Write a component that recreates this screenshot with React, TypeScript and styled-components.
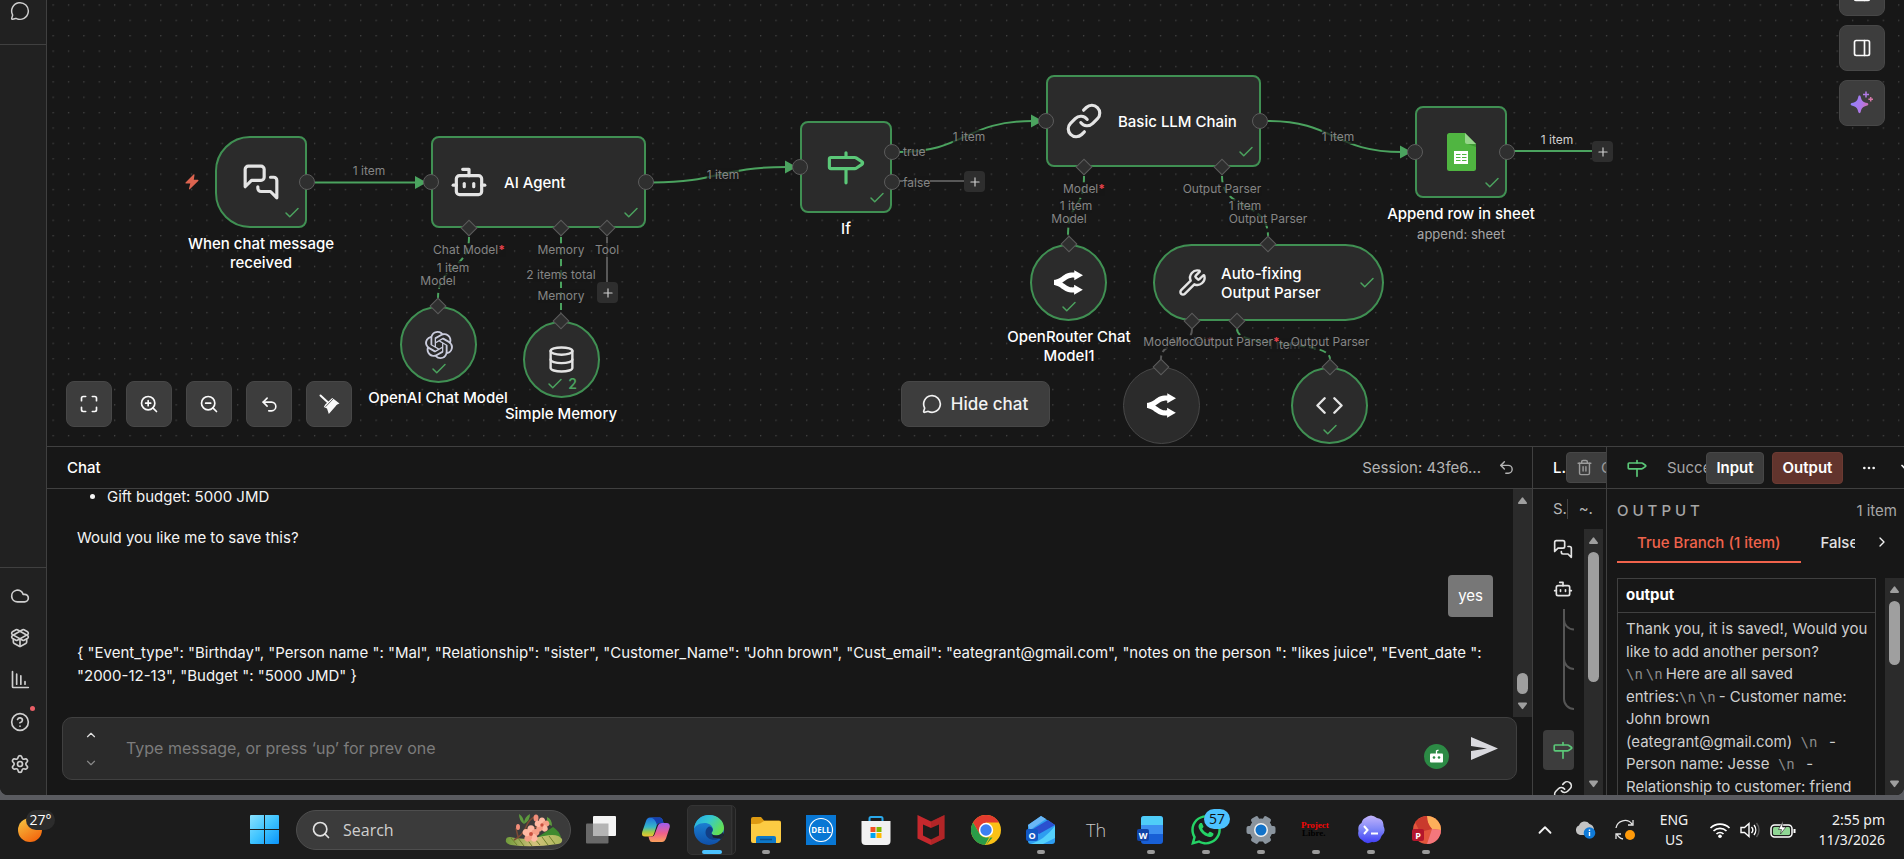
import React from "react";
import styled, { createGlobalStyle, css } from "styled-components";
import {
  Bot,
  Check,
  ChevronDown,
  ChevronRight,
  ChevronUp,
  CircleQuestionMark,
  Cloud,
  Code,
  Database,
  Ellipsis,
  Link,
  Maximize,
  MessageCircle,
  PanelRight,
  Plus,
  Search,
  Settings,
  Trash2,
  Undo2,
  Wrench,
  ZoomIn,
  ZoomOut,
} from "lucide-react";
import { FaWhatsapp } from "react-icons/fa";

const color = {
  canvas: "#171717",
  side: "#212121",
  surface: "#2b2b2b",
  raised: "#3d3d3d",
  line: "#404040",
  port: "#5c5c5c",
  green: "#4ba35f",
  signpost: "#5bc878",
  text: "#f2f2f2",
  soft: "#b4b4b4",
  muted: "#858585",
  accent: "#f0634c",
};

const GlobalStyle = createGlobalStyle`
  * { box-sizing: border-box; }
  body {
    margin: 0;
    background: #5a5b60;
    color: ${color.text};
    font-family: Inter, "Liberation Sans", sans-serif;
    font-size: 15px;
    overflow: hidden;
  }
  button {
    font: inherit;
    color: inherit;
    border: 0;
    padding: 0;
    background: none;
    display: flex;
    align-items: center;
    justify-content: center;
  }
`;

/* ---------- Shell ---------- */

const Desktop = styled.div`
  display: flex;
  flex-direction: column;
  height: 100vh;
`;

const AppWindow = styled.div`
  flex: 1;
  min-height: 0;
  display: flex;
  background: ${color.canvas};
  border-radius: 0 0 8px 8px;
  overflow: hidden;
  margin-bottom: 5px;
`;

const Sidebar = styled.nav`
  width: 47px;
  flex: none;
  display: flex;
  flex-direction: column;
  justify-content: space-between;
  background: ${color.side};
  border-right: 1px solid ${color.line};
`;

const SideTop = styled.div`
  height: 45px;
  display: flex;
  flex-direction: column;
  align-items: center;
  padding-right: 6px;
  border-bottom: 1px solid ${color.line};
`;

const SideBottom = styled.div`
  padding: 7px 6px 10px 0;
  display: flex;
  flex-direction: column;
  align-items: center;
  border-top: 1px solid ${color.line};
`;

const SideButton = styled.button<{ $h?: number }>`
  && {
    position: relative;
    width: 40px;
    height: ${(p) => p.$h ?? 42}px;
    color: #cfcfcf;
  }
`;

const Alert = styled.span`
  position: absolute;
  top: 5px;
  right: 5px;
  width: 5px;
  height: 5px;
  border-radius: 50%;
  background: #ea5f67;
`;

const Main = styled.main`
  flex: 1;
  min-width: 0;
  display: flex;
  flex-direction: column;
`;

/* ---------- Canvas ---------- */

const Canvas = styled.section`
  position: relative;
  flex: 1;
  min-height: 0;
  overflow: hidden;
`;

const Wires = styled.svg`
  position: absolute;
  inset: 0;
  width: 100%;
  height: 100%;
`;

const NodeBox = styled.div<{ $x: number; $y: number; $w: number; $h: number; $r: string; $idle?: boolean }>`
  position: absolute;
  left: ${(p) => p.$x}px;
  top: ${(p) => p.$y}px;
  width: ${(p) => p.$w}px;
  height: ${(p) => p.$h}px;
  border-radius: ${(p) => p.$r};
  border: ${(p) => (p.$idle ? "1px solid #484848" : `2px solid #409053`)};
  background: ${color.surface};
  display: flex;
  align-items: center;
  justify-content: center;
  color: #e4e4e4;
`;

const WideContent = styled.div<{ $gap: number; $pad: number }>`
  flex: 1;
  display: flex;
  align-items: center;
  gap: ${(p) => p.$gap}px;
  padding-left: ${(p) => p.$pad}px;
  font-weight: 500;
  line-height: 19px;
  color: #fff;
  svg {
    flex: none;
    color: #e4e4e4;
  }
`;

const Done = styled.span<{ $at: "corner" | "bottom" | "side" }>`
  position: absolute;
  display: flex;
  align-items: center;
  gap: 4px;
  font-size: 14px;
  font-weight: 600;
  line-height: 18px;
  color: ${color.green};
  ${(p) =>
    p.$at === "corner"
      ? css`right: 4px; bottom: 4px;`
      : p.$at === "bottom"
      ? css`bottom: 3px;`
      : css`right: 6px;`}
`;

const NodeName = styled.div<{ $x: number; $y: number; $w: number }>`
  position: absolute;
  left: ${(p) => p.$x - p.$w / 2}px;
  top: ${(p) => p.$y}px;
  width: ${(p) => p.$w}px;
  text-align: center;
  font-weight: 500;
  line-height: 19px;
  color: #fff;
  small {
    display: block;
    font-size: 13px;
    font-weight: 400;
    line-height: 22px;
    color: #a6a6a6;
  }
`;

const Port = styled.span<{ $x: number; $y: number; $diamond?: boolean }>`
  position: absolute;
  left: ${(p) => p.$x - (p.$diamond ? 6 : 8)}px;
  top: ${(p) => p.$y - (p.$diamond ? 6 : 8)}px;
  width: ${(p) => (p.$diamond ? 12 : 16)}px;
  height: ${(p) => (p.$diamond ? 12 : 16)}px;
  border: 1px solid ${color.port};
  border-radius: ${(p) => (p.$diamond ? "0" : "50%")};
  background: #2f2f2f;
  transform: ${(p) => (p.$diamond ? "rotate(45deg)" : "none")};
`;

const WireLabel = styled.span<{ $x: number; $y: number; $bright?: boolean; $left?: boolean }>`
  position: absolute;
  left: ${(p) => p.$x}px;
  top: ${(p) => p.$y - 7}px;
  transform: ${(p) => (p.$left ? "none" : "translateX(-50%)")};
  white-space: nowrap;
  font-size: 12px;
  line-height: 14px;
  color: ${(p) => (p.$bright ? "#d0d0d0" : color.muted)};
  background: rgba(23, 23, 23, 0.7);
  b {
    color: #e8424c;
  }
`;

const AddButton = styled.button<{ $x: number; $y: number }>`
  && {
    position: absolute;
    left: ${(p) => p.$x}px;
    top: ${(p) => p.$y}px;
    width: 21px;
    height: 21px;
    border-radius: 4px;
    background: #2e2e2e;
    color: #cfcfcf;
  }
`;

const BoltMark = styled.svg`
  position: absolute;
  left: 138px;
  top: 174px;
`;

const CanvasTools = styled.div`
  position: absolute;
  left: 19px;
  bottom: 19px;
  display: flex;
  gap: 14px;
`;

const RightTools = styled.div`
  position: absolute;
  right: 19px;
  top: -30px;
  display: flex;
  flex-direction: column;
  gap: 9px;
`;

const ToolButton = styled.button`
  && {
    width: 46px;
    height: 46px;
    border: 1px solid #474747;
    border-radius: 8px;
    background: ${color.raised};
    color: #fafafa;
  }
`;

const HideChat = styled.button`
  && {
    position: absolute;
    left: 50%;
    bottom: 19px;
    margin-left: -75px;
    width: 149px;
    height: 46px;
    gap: 9px;
    border: 1px solid #474747;
    border-radius: 8px;
    background: ${color.raised};
    font-size: 17px;
    font-weight: 500;
  }
`;

/* ---------- Bottom panel ---------- */

const Panel = styled.section`
  flex: none;
  height: 349px;
  display: flex;
  border-top: 1px solid ${color.line};
`;

const Column = styled.div<{ $w?: number }>`
  display: flex;
  flex-direction: column;
  overflow: hidden;
  ${(p) => (p.$w ? css`flex: none; width: ${p.$w}px;` : css`flex: 1; min-width: 0;`)}
  &:not(:last-child) {
    border-right: 1px solid ${color.line};
  }
`;

const ColumnHead = styled.header`
  flex: none;
  height: 42px;
  display: flex;
  align-items: center;
  padding-left: 20px;
  border-bottom: 1px solid ${color.line};
  overflow: hidden;
`;

const HeadTitle = styled.h2`
  flex: none;
  margin: 0;
  font-size: 15px;
  font-weight: 500;
  line-height: 20px;
  color: #fff;
`;

const Session = styled.div`
  margin-left: auto;
  padding-right: 17px;
  display: flex;
  align-items: center;
  gap: 17px;
  color: ${color.soft};
`;

const ChatScroll = styled.div`
  flex: 1;
  min-height: 0;
  display: flex;
`;

const Messages = styled.div`
  flex: 1;
  min-width: 0;
  display: flex;
  flex-direction: column;
  justify-content: flex-end;
  overflow: hidden;
  padding: 0 20px 30px 30px;
  line-height: 23px;
  color: #f4f4f4;
  ul {
    margin: 0 0 18px;
    padding-left: 30px;
  }
  p {
    margin: 0 0 26px;
  }
  p:last-child {
    margin: 0;
  }
`;

const Bubble = styled.div`
  align-self: flex-end;
  height: 42px;
  margin-bottom: 24px;
  padding: 0 10px;
  line-height: 42px;
  border-radius: 4px 4px 0 4px;
  background: #777;
  color: #fff;
`;

const Composer = styled.form`
  flex: none;
  height: 63px;
  margin: 0 15px 15px;
  padding: 0 18px;
  display: flex;
  align-items: center;
  border: 1px solid ${color.line};
  border-radius: 10px;
  background: ${color.surface};
`;

const HistoryNav = styled.div`
  width: 20px;
  display: flex;
  flex-direction: column;
  align-items: center;
  gap: 14px;
  color: #e0e0e0;
`;

const MessageInput = styled.input`
  flex: 1;
  min-width: 0;
  margin-left: 25px;
  padding: 0 0 2px;
  border: 0;
  outline: 0;
  background: none;
  color: ${color.text};
  font: 400 16px/24px Inter, sans-serif;
  &::placeholder {
    color: #7c7c7c;
  }
`;

const HelperBadge = styled.button`
  && {
    align-self: flex-end;
    width: 25px;
    height: 25px;
    margin: 0 22px 10px 0;
    border-radius: 50%;
    background: #2c8a45;
  }
`;

const Track = styled.div`
  flex: none;
  width: 19px;
  display: flex;
  flex-direction: column;
  align-items: center;
  background: ${color.surface};
`;

const Rail = styled.div<{ $end?: boolean }>`
  flex: 1;
  display: flex;
  align-items: ${(p) => (p.$end ? "flex-end" : "flex-start")};
`;

const Thumb = styled.div<{ $h: number }>`
  width: 11px;
  height: ${(p) => p.$h}px;
  border-radius: 6px;
  background: #9f9f9f;
`;

const ClearButton = styled.button`
  && {
    flex: none;
    width: 90px;
    height: 31px;
    justify-content: flex-start;
    gap: 8px;
    padding-left: 9px;
    border: 1px solid #474747;
    border-radius: 4px;
    background: ${color.raised};
    color: #9b9b9b;
  }
`;

const LogSummary = styled.div`
  flex: none;
  height: 40px;
  display: flex;
  align-items: center;
  padding-left: 20px;
  color: ${color.soft};
`;

const SummaryCell = styled.span<{ $divided?: boolean }>`
  width: ${(p) => (p.$divided ? 16 : 30)}px;
  line-height: 20px;
  margin-right: ${(p) => (p.$divided ? 11 : 0)}px;
  border-right: ${(p) => (p.$divided ? `1px solid ${color.line}` : "0")};
  overflow: hidden;
`;

const LogRows = styled.div`
  flex: 1;
  min-height: 0;
  display: flex;
  padding-right: 3px;
`;

const LogList = styled.div`
  flex: 1;
  padding-left: 10px;
  overflow: hidden;
  color: #e4e4e4;
`;

const LogRow = styled.button<{ $on?: boolean }>`
  && {
    width: 31px;
    height: 40px;
    padding-left: 8px;
    border-radius: 4px;
    background: ${(p) => (p.$on ? color.raised : "none")};
  }
`;

const LogTree = styled.svg`
  display: block;
  margin-bottom: 19px;
`;

const RunStatus = styled.span`
  flex: none;
  width: 39px;
  margin-left: 20px;
  overflow: hidden;
  white-space: nowrap;
  color: #a6a6a6;
`;

const ViewToggle = styled.button<{ $on?: boolean }>`
  && {
    flex: none;
    width: ${(p) => (p.$on ? 71 : 58)}px;
    height: 32px;
    border: 1px solid ${(p) => (p.$on ? "#6b3a32" : "#474747")};
    border-radius: 4px;
    background: ${(p) => (p.$on ? "#62342d" : color.raised)};
    font-weight: 600;
    color: #fff;
  }
  & + & {
    margin-left: 8px;
  }
`;

const HeadIcon = styled.button<{ $gap: number }>`
  && {
    flex: none;
    width: 20px;
    height: 20px;
    margin-left: ${(p) => p.$gap}px;
  }
`;

const OutputTitle = styled.div`
  flex: none;
  height: 43px;
  display: flex;
  align-items: center;
  justify-content: space-between;
  padding: 0 7px 0 10px;
  color: #a6a6a6;
  h3 {
    margin: 0;
    font-size: 15px;
    font-weight: 500;
    letter-spacing: 4px;
  }
`;

const Tabs = styled.div`
  flex: none;
  height: 31px;
  margin-left: 10px;
  display: flex;
  align-items: flex-start;
`;

const Tab = styled.button<{ $on?: boolean }>`
  && {
    flex: ${(p) => (p.$on ? "none" : "0 1 54px")};
    justify-content: flex-start;
    height: 31px;
    padding: ${(p) => (p.$on ? "0 20px 9px" : "0 0 11px 20px")};
    border-bottom: ${(p) => (p.$on ? `2px solid ${color.accent}` : "0")};
    color: ${(p) => (p.$on ? color.accent : "#e2e2e2")};
    font-weight: 500;
    overflow: hidden;
  }
`;

const TabNext = styled.button`
  && {
    width: 20px;
    height: 20px;
    margin-left: 17px;
  }
`;

const OutputBody = styled.div`
  flex: 1;
  min-height: 0;
  margin-top: 15px;
  display: flex;
  justify-content: space-between;
  padding-left: 10px;
`;

const TableClip = styled.div`
  width: 259px;
  overflow: hidden;
`;

const DataTable = styled.table`
  width: 100%;
  border-collapse: collapse;
  font-size: 15px;
  line-height: 1.5;
  th {
    height: 34px;
    padding: 0 8px;
    text-align: left;
    font-weight: 700;
    color: #fff;
    border: 1px solid ${color.line};
  }
  td {
    padding: 5px 4px 5px 8px;
    vertical-align: top;
    color: #cfcfcf;
    border: 1px solid ${color.line};
  }
`;

const Newline = styled.span`
  padding-right: 3px;
  font-family: "DejaVu Sans Mono", monospace;
  font-size: 14px;
  line-height: 1;
  color: #8c8c8c;
`;

/* ---------- Taskbar ---------- */

const TaskbarRoot = styled.footer`
  flex: none;
  height: 59px;
  display: flex;
  align-items: center;
  padding-right: 19px;
  background: #1c1c1c;
  font-family: "Open Sans", "Noto Sans", sans-serif;
`;

const Weather = styled.button`
  && {
    position: relative;
    width: 237px;
    height: 46px;
    justify-content: flex-start;
    padding-left: 17px;
  }
`;

const Temperature = styled.span`
  position: absolute;
  left: 26px;
  top: 3px;
  width: 29px;
  height: 20px;
  border-radius: 10px;
  background: #2c2c2c;
  font-size: 14px;
  line-height: 19px;
  text-align: center;
  color: #fff;
`;

const TaskButton = styled.button<{ $active?: boolean }>`
  && {
    position: relative;
    width: 55px;
    height: 50px;
    flex: none;
    ${(p) =>
      p.$active &&
      css`
        width: 49px;
        margin: 0 2px 0 4px;
        padding-right: 6px;
        border: 1px solid #343434;
        border-radius: 5px;
        background: linear-gradient(90deg, #2b2b2b 43px, #3a3a3a 43px, #222 45px);
      `}
  }
`;

const RunMark = styled.span<{ $active?: boolean }>`
  position: absolute;
  left: ${(p) => (p.$active ? 14 : 24)}px;
  bottom: ${(p) => (p.$active ? 0 : 1)}px;
  width: ${(p) => (p.$active ? 20 : 8)}px;
  height: 4px;
  border-radius: 2px;
  background: ${(p) => (p.$active ? "#4cc2ff" : "#9a9a9a")};
`;

const Unread = styled.span`
  position: absolute;
  left: 26px;
  top: 4px;
  width: 26px;
  height: 20px;
  border-radius: 10px;
  background: #4cc2ff;
  color: #111;
  font-size: 14px;
  line-height: 20px;
`;

const SearchBox = styled.label`
  flex: none;
  width: 275px;
  height: 40px;
  margin: 0 2px 0 4px;
  padding: 0 7px 0 14px;
  display: flex;
  align-items: center;
  border: 1px solid #4e4e4e;
  border-radius: 20px;
  background: #3b3b3b;
  input {
    flex: 1;
    min-width: 0;
    margin-left: 12px;
    padding: 0;
    border: 0;
    outline: 0;
    background: none;
    color: #fff;
    font: 16px/24px "Open Sans", sans-serif;
  }
  input::placeholder {
    color: #cfcfcf;
  }
`;

const Tray = styled.div`
  margin-left: auto;
  display: flex;
  align-items: center;
  font-family: "Noto Sans", sans-serif;
  font-size: 14px;
  line-height: 20px;
`;

const TrayCell = styled.button<{ $w: number; $right?: boolean }>`
  && {
    width: ${(p) => p.$w}px;
    height: 40px;
    justify-content: ${(p) => (p.$right ? "flex-end" : "center")};
    text-align: ${(p) => (p.$right ? "right" : "center")};
  }
`;

/* ---------- Drawings ---------- */

const ChatsIcon = ({ size }: { size: number }) => (
  <svg width={size} height={size} viewBox="0 0 24 24" fill="none" stroke="currentColor" strokeWidth={2} strokeLinecap="round" strokeLinejoin="round">
    <path d="M14 9a2 2 0 0 1-2 2H6l-4 4V4a2 2 0 0 1 2-2h8a2 2 0 0 1 2 2z" />
    <path d="M18 9h2a2 2 0 0 1 2 2v11l-4-4h-6a2 2 0 0 1-2-2v-1" />
  </svg>
);

const SignIcon = ({ size }: { size: number }) => (
  <svg width={size} height={size} viewBox="0 0 24 24" fill="none" stroke={color.signpost} strokeWidth={2} strokeLinecap="round" strokeLinejoin="round" style={{ flex: "none" }}>
    <path d="M12 13v9M12 3v3" />
    <path d="M2.500 6a1 1 0 0 0-1 1v5a1 1 0 0 0 1 1h15a2 2 0 0 0 1.150-.370l3.420-2.310a1 1 0 0 0 0-1.640l-3.420-2.320A2 2 0 0 0 17.500 6z" />
  </svg>
);

const OpenBoxIcon = () => (
  <svg width={20} height={20} viewBox="0 0 24 24" fill="none" stroke="currentColor" strokeWidth={2} strokeLinecap="round" strokeLinejoin="round">
    <path d="M12 22v-9" />
    <path d="M15.17 2.21a1.67 1.67 0 0 1 1.63 0L21 4.57a1.93 1.93 0 0 1 0 3.36L8.82 14.79a1.66 1.66 0 0 1-1.64 0L3 12.43a1.93 1.93 0 0 1 0-3.36z" />
    <path d="M20 13v3.87a2.06 2.06 0 0 1-1.11 1.83l-6 3.08a1.93 1.93 0 0 1-1.78 0l-6-3.08A2.06 2.06 0 0 1 4 16.87V13" />
    <path d="M21 12.43a1.93 1.93 0 0 0 0-3.36L8.83 2.2a1.64 1.64 0 0 0-1.63 0L3 4.57a1.93 1.93 0 0 0 0 3.36l12.18 6.86a1.64 1.64 0 0 0 1.63 0z" />
  </svg>
);

const BarsIcon = () => (
  <svg width={20} height={20} viewBox="0 0 24 24" fill="none" stroke="currentColor" strokeWidth={2} strokeLinecap="round" strokeLinejoin="round">
    <path d="M3 2v18a1 1 0 0 0 1 1h18M8 17V5M13 17V7M18 17v-3" />
  </svg>
);

const OpenAiIcon = () => (
  <svg width={28} height={28} viewBox="0 0 24 24" fill="#c9cbdc">
    <path d="M22.2819 9.8211a5.9847 5.9847 0 0 0-.5157-4.9108 6.0462 6.0462 0 0 0-6.5098-2.9A6.0651 6.0651 0 0 0 4.9807 4.1818a5.9847 5.9847 0 0 0-3.9977 2.9 6.0462 6.0462 0 0 0 .7427 7.0966 5.98 5.98 0 0 0 .511 4.9107 6.051 6.051 0 0 0 6.5146 2.9001A5.9847 5.9847 0 0 0 13.2599 24a6.0557 6.0557 0 0 0 5.7718-4.2058 5.9894 5.9894 0 0 0 3.9977-2.9001 6.0557 6.0557 0 0 0-.7475-7.0729zm-9.022 12.6081a4.4755 4.4755 0 0 1-2.8764-1.0408l.1419-.0804 4.7783-2.7582a.7948.7948 0 0 0 .3927-.6813v-6.7369l2.02 1.1686a.071.071 0 0 1 .038.052v5.5826a4.504 4.504 0 0 1-4.4945 4.4944zm-9.6607-4.1254a4.4708 4.4708 0 0 1-.5346-3.0137l.142.0852 4.783 2.7582a.7712.7712 0 0 0 .7806 0l5.8428-3.3685v2.3324a.0804.0804 0 0 1-.0332.0615L9.74 19.9502a4.4992 4.4992 0 0 1-6.1408-1.6464zM2.3408 7.8956a4.485 4.485 0 0 1 2.3655-1.9728V11.6a.7664.7664 0 0 0 .3879.6765l5.8144 3.3543-2.0201 1.1685a.0757.0757 0 0 1-.071 0l-4.8303-2.7865A4.504 4.504 0 0 1 2.3408 7.872zm16.5963 3.8558L13.1038 8.364 15.1192 7.2a.0757.0757 0 0 1 .071 0l4.8303 2.7913a4.4944 4.4944 0 0 1-.6765 8.1042v-5.6772a.79.79 0 0 0-.407-.667zm2.0107-3.0231l-.142-.0852-4.7735-2.7818a.7759.7759 0 0 0-.7854 0L9.409 9.2297V6.8974a.0662.0662 0 0 1 .0284-.0615l4.8303-2.7866a4.4992 4.4992 0 0 1 6.6802 4.66zM8.3065 12.863l-2.02-1.1638a.0804.0804 0 0 1-.038-.0567V6.0742a4.4992 4.4992 0 0 1 7.3757-3.4537l-.142.0805L8.704 5.459a.7948.7948 0 0 0-.3927.6813zm1.0976-2.3654l2.602-1.4998 2.6069 1.4998v2.9994l-2.5974 1.4997-2.6067-1.4997Z" />
  </svg>
);

const OpenRouterIcon = () => (
  <svg width={29} height={29} viewBox="0 0 24 24" fill="#fff">
    <path d="M16.778 1.844v1.919q-.569-.026-1.138-.032-.708-.008-1.415.037c-1.93.126-4.023.728-6.149 2.237-2.911 2.066-2.731 1.95-4.14 2.75-.396.223-1.342.574-2.185.798-.841.225-1.753.333-1.751.333v4.229s.768.108 1.61.333c.842.224 1.789.575 2.185.799 1.41.798 1.228.683 4.14 2.75 2.126 1.509 4.22 2.11 6.148 2.236.88.058 1.716.041 2.555.005v1.918l7.222-4.168-7.222-4.17v2.176c-.86.038-1.611.065-2.278.021-1.364-.09-2.417-.357-3.979-1.465-2.244-1.593-2.866-2.027-3.68-2.508.889-.518 1.449-.906 3.822-2.59 1.56-1.109 2.614-1.377 3.978-1.466.667-.044 1.418-.017 2.278.02v2.176L24 6.014Z" />
  </svg>
);

const SheetsIcon = () => (
  <svg width={29} height={38} viewBox="0 0 29 38">
    <path d="M2.500 0H18L29 11V35.500a2.500 2.500 0 0 1-2.500 2.500h-24A2.500 2.500 0 0 1 0 35.500v-33A2.500 2.500 0 0 1 2.500 0Z" fill="#50b541" />
    <path d="M18 10 29 14V11Z" fill="#3f9a35" />
    <path d="M18 0 29 11H20a2 2 0 0 1-2-2Z" fill="#96d58b" />
    <rect x="7" y="18" width="14" height="13" fill="#fff" />
    <path d="M9 21.500h4.500M15 21.500h4.500M9 24.500h4.500M15 24.500h4.500M9 27.500h4.500M15 27.500h4.500" stroke="#50b541" strokeWidth="1.200" />
  </svg>
);

const BroomIcon = () => (
  <svg width={21} height={21} viewBox="0 0 21 21" fill="currentColor">
    <path d="M1.500 1.500 8.500 8" stroke="currentColor" strokeWidth="2" strokeLinecap="round" />
    <path d="M13.200 4 15 5.200 20.500 9.500C18.800 10 17.500 11 16.600 12.200L9.800 20 8 14.500 4.800 13 6.200 10.500Z" />
    <path d="M14.500 4.500 6.500 12.800" stroke={color.raised} strokeWidth=".8" />
  </svg>
);

const SparklesIcon = () => (
  <svg width={24} height={24} viewBox="0 0 24 24" fill="url(#spark)">
    <defs>
      <linearGradient id="spark" gradientUnits="userSpaceOnUse" x1="0" y1="10" x2="22" y2="16">
        <stop offset="0" stopColor="#8b83ff" />
        <stop offset=".55" stopColor="#b077e6" />
        <stop offset="1" stopColor="#e06a8c" />
      </linearGradient>
    </defs>
    <path d="M9.500 4.500c.7 0 1 .4 1.200 1.200.8 4 2.100 5.200 6.600 6.400 1.400.4 1.400 2 0 2.400-4.500 1.200-5.800 2.500-6.600 6.600-.3 1.500-2.100 1.500-2.400 0-.8-4.100-2.100-5.400-6.600-6.600-1.400-.4-1.400-2 0-2.400 4.500-1.200 5.800-2.400 6.600-6.400.2-.8.500-1.200 1.200-1.200Z" />
    <path d="M16 .5v6M13 3.500h6" stroke="#b27be6" strokeWidth="1.500" />
    <path d="M20.700 6v4.600M18.400 8.300H23" stroke="#d479a8" strokeWidth="1.500" />
  </svg>
);

const SendIcon = () => (
  <svg width={27} height={23} viewBox="0 0 27 23" fill="#d9d9de">
    <path d="M0 0 27 11.500 0 23V14L16 11.500 0 9Z" />
  </svg>
);

const HelperIcon = () => (
  <svg width={15} height={15} viewBox="0 0 15 15">
    <path d="M7.500 5V2L9.500 1" stroke="#fff" strokeWidth="1.300" fill="none" />
    <rect x="1" y="4.500" width="13" height="9" rx="1" fill="#fff" />
    <circle cx="5" cy="8.500" r="1.300" fill="#2c8a45" />
    <circle cx="10" cy="8.500" r="1.300" fill="#2c8a45" />
  </svg>
);

const ArrowMark = ({ down }: { down?: boolean }) => (
  <svg width={11} height={23} viewBox="0 0 11 23">
    <path d={down ? "M2 8.500h7a1 1 0 0 1 .8 1.500L6.200 14.800a1 1 0 0 1-1.400 0L1.200 10a1 1 0 0 1 .8-1.500Z" : "M2 15h7a1 1 0 0 0 .8-1.500L6.200 8.700a1 1 0 0 0-1.400 0L1.200 13.500a1 1 0 0 0 .8 1.500Z"} fill="#9f9f9f" />
  </svg>
);

const Scrollbar = ({ thumb, end }: { thumb: number; end?: boolean }) => (
  <Track aria-hidden="true">
    <ArrowMark />
    <Rail $end={end}>
      <Thumb $h={thumb} />
    </Rail>
    <ArrowMark down />
  </Track>
);

const Tick = () => <Check size={18} strokeWidth={2} />;

/* ---------- Canvas data ---------- */

const solidWires = [
  "M268 182.500H370",
  "M606 182.500C672 182.500 672 167 740 167",
  "M852 152C918 152 918 121 986 121",
  "M1221 121C1287 121 1287 152 1355 152",
  "M1467 151H1546",
];
const arrows = [
  [368, 182.5],
  [738, 167],
  [984, 121],
  [1353, 152],
];
const dashedWires = [
  "M422 237C422 271 391 264 391 298",
  "M514 237V313",
  "M1037 176C1037 212 1021 200 1021 236",
  "M1175 176C1175 212 1221 200 1221 236",
  "M1190 329C1190 350 1283 338 1283 359",
];
const roundPorts = [
  [260, 182], [384, 182], [599, 182], [753, 167], [845, 152], [845, 182],
  [999, 121], [1213, 121], [1368, 152], [1460, 152],
];
const diamondPorts = [
  [422, 228], [514, 228], [560, 228], [391, 306], [514, 321],
  [1037, 167], [1175, 167], [1022, 244], [1221, 244],
  [1145, 321], [1190, 321], [1114, 367], [1283, 367],
];

function FlowCanvas() {
  return (
    <Canvas aria-label="Workflow">
      <Wires aria-hidden="true">
        <defs>
          <pattern id="dots" x="5.500" y="4.300" width="15.380" height="15.380" patternUnits="userSpaceOnUse">
            <circle cx=".7" cy=".7" r=".7" fill="#4c4c4c" />
          </pattern>
        </defs>
        <rect width="100%" height="100%" fill="url(#dots)" />
        <g fill="none" stroke={color.green} strokeWidth="2">
          {solidWires.map((d) => <path key={d} d={d} />)}
          {dashedWires.map((d) => <path key={d} d={d} strokeDasharray="7 4" />)}
        </g>
        <g fill="none" stroke="#585858" strokeWidth="2">
          <path d="M852 181H917M560 237V282" />
          <path d="M1145 329C1145 350 1114 338 1114 359" strokeDasharray="7 4" />
        </g>
        {arrows.map(([x, y]) => (
          <path key={x} d={`M${x} ${y - 6.5}l9 5v3l-9 5Z`} fill={color.green} />
        ))}
      </Wires>

      <BoltMark width={14} height={16} viewBox="0 0 14 16">
        <path d="M8.500 0.500 0.800 8.200c-.6.700-.3 1.300.5 1.300h4L4 14.600c-.1.900.5 1.100 1 .5l8.200-8c.6-.7.300-1.300-.5-1.300H8.800L9.500 1c.1-.7-.4-1.100-1-.5Z" fill="#dc6450" />
      </BoltMark>

      <WireLabel $x={322} $y={171}>1 item</WireLabel>
      <WireLabel $x={676} $y={175}>1 item</WireLabel>
      <WireLabel $x={922} $y={137}>1 item</WireLabel>
      <WireLabel $x={1291} $y={137}>1 item</WireLabel>
      <WireLabel $x={1510} $y={140} $bright>1 item</WireLabel>
      <WireLabel $x={406} $y={268}>1 item</WireLabel>
      <WireLabel $x={514} $y={275}>2 items total</WireLabel>
      <WireLabel $x={1029} $y={206}>1 item</WireLabel>
      <WireLabel $x={1198} $y={206}>1 item</WireLabel>
      <WireLabel $x={1237} $y={345}>1 item</WireLabel>

      <NodeBox $x={168} $y={136} $w={92} $h={92} $r="35px 8px 8px 35px">
        <ChatsIcon size={38} />
        <Done $at="corner"><Tick /></Done>
      </NodeBox>
      <NodeName $x={214} $y={234} $w={170}>When chat message received</NodeName>

      <NodeBox $x={384} $y={136} $w={215} $h={92} $r="8px">
        <WideContent $pad={17} $gap={16}>
          <Bot size={38} />AI Agent
        </WideContent>
        <Done $at="corner"><Tick /></Done>
      </NodeBox>

      <NodeBox $x={353} $y={306} $w={77} $h={77} $r="50%">
        <OpenAiIcon />
        <Done $at="bottom"><Tick /></Done>
      </NodeBox>
      <NodeName $x={391} $y={388} $w={170}>OpenAI Chat Model</NodeName>

      <NodeBox $x={476} $y={321} $w={77} $h={77} $r="50%">
        <Database size={29} />
        <Done $at="bottom"><Tick />2</Done>
      </NodeBox>
      <NodeName $x={514} $y={404} $w={170}>Simple Memory</NodeName>

      <NodeBox $x={753} $y={121} $w={92} $h={92} $r="8px">
        <SignIcon size={38} />
        <Done $at="corner"><Tick /></Done>
      </NodeBox>
      <NodeName $x={799} $y={219} $w={90}>If</NodeName>

      <NodeBox $x={999} $y={75} $w={215} $h={92} $r="8px">
        <WideContent $pad={17} $gap={15}>
          <Link size={38} />Basic LLM Chain
        </WideContent>
        <Done $at="corner"><Tick /></Done>
      </NodeBox>

      <NodeBox $x={983} $y={244} $w={77} $h={77} $r="50%">
        <OpenRouterIcon />
        <Done $at="bottom"><Tick /></Done>
      </NodeBox>
      <NodeName $x={1022} $y={327} $w={140}>OpenRouter Chat Model1</NodeName>

      <NodeBox $x={1106} $y={244} $w={231} $h={77} $r="39px">
        <WideContent $pad={23} $gap={14}>
          <Wrench size={29} />
          <span>Auto-fixing<br />Output Parser</span>
        </WideContent>
        <Done $at="side"><Tick /></Done>
      </NodeBox>

      <NodeBox $x={1076} $y={367} $w={77} $h={77} $r="50%" $idle>
        <OpenRouterIcon />
      </NodeBox>

      <NodeBox $x={1244} $y={367} $w={77} $h={77} $r="50%">
        <Code size={29} />
        <Done $at="bottom"><Tick /></Done>
      </NodeBox>

      <NodeBox $x={1368} $y={106} $w={92} $h={92} $r="8px">
        <SheetsIcon />
        <Done $at="corner"><Tick /></Done>
      </NodeBox>
      <NodeName $x={1414} $y={204} $w={170}>
        Append row in sheet
        <small>append: sheet</small>
      </NodeName>

      {roundPorts.map(([x, y]) => <Port key={`${x}-${y}`} $x={x} $y={y} />)}
      {diamondPorts.map(([x, y]) => <Port key={`${x}-${y}`} $x={x} $y={y} $diamond />)}

      <WireLabel $x={422} $y={250}>Chat Model<b>*</b></WireLabel>
      <WireLabel $x={391} $y={281}>Model</WireLabel>
      <WireLabel $x={514} $y={250}>Memory</WireLabel>
      <WireLabel $x={514} $y={296}>Memory</WireLabel>
      <WireLabel $x={560} $y={250}>Tool</WireLabel>
      <WireLabel $x={856} $y={152} $left>true</WireLabel>
      <WireLabel $x={856} $y={183} $left>false</WireLabel>
      <WireLabel $x={1037} $y={189}>Model<b>*</b></WireLabel>
      <WireLabel $x={1022} $y={219}>Model</WireLabel>
      <WireLabel $x={1175} $y={189}>Output Parser</WireLabel>
      <WireLabel $x={1221} $y={219}>Output Parser</WireLabel>
      <WireLabel $x={1145} $y={342}>Model<b>*</b></WireLabel>
      <WireLabel $x={1114} $y={342}>Model</WireLabel>
      <WireLabel $x={1190} $y={342}>Output Parser<b>*</b></WireLabel>
      <WireLabel $x={1283} $y={342}>Output Parser</WireLabel>

      <AddButton $x={550} $y={282} aria-label="Add tool"><Plus size={14} /></AddButton>
      <AddButton $x={917} $y={171} aria-label="Add node to false branch"><Plus size={14} /></AddButton>
      <AddButton $x={1545} $y={141} aria-label="Add node"><Plus size={14} /></AddButton>

      <CanvasTools>
        <ToolButton aria-label="Fit to view"><Maximize size={20} /></ToolButton>
        <ToolButton aria-label="Zoom in"><ZoomIn size={20} /></ToolButton>
        <ToolButton aria-label="Zoom out"><ZoomOut size={20} /></ToolButton>
        <ToolButton aria-label="Reset zoom"><Undo2 size={19} /></ToolButton>
        <ToolButton aria-label="Tidy up"><BroomIcon /></ToolButton>
      </CanvasTools>

      <HideChat><MessageCircle size={20} strokeWidth={2} />Hide chat</HideChat>

      <RightTools>
        <ToolButton aria-label="Add sticky note"><PanelRight size={20} /></ToolButton>
        <ToolButton aria-label="Toggle side panel"><PanelRight size={20} /></ToolButton>
        <ToolButton aria-label="Ask assistant"><SparklesIcon /></ToolButton>
      </RightTools>
    </Canvas>
  );
}

/* ---------- Panel ---------- */

const Nl = () => <Newline>{"\\n"}</Newline>;

function BottomPanel() {
  return (
    <Panel>
      <Column>
        <ColumnHead>
          <HeadTitle>Chat</HeadTitle>
          <Session>
            Session: 43fe6...
            <button aria-label="Reset session"><Undo2 size={17} /></button>
          </Session>
        </ColumnHead>
        <ChatScroll>
          <Messages>
            <ul><li>Gift budget: 5000 JMD</li></ul>
            <p>Would you like me to save this?</p>
            <Bubble>yes</Bubble>
            <p>
              {'{ "Event_type": "Birthday", "Person name ": "Mal", "Relationship": "sister", "Customer_Name": "John brown", "Cust_email": "eategrant@gmail.com", "notes on the person ": "likes juice", "Event_date ": "2000-12-13", "Budget ": "5000 JMD" }'}
            </p>
          </Messages>
          <Scrollbar thumb={21} end />
        </ChatScroll>
        <Composer>
          <HistoryNav>
            <button type="button" aria-label="Previous message"><ChevronUp size={14} /></button>
            <button type="button" aria-label="Next message"><ChevronDown size={14} color="#8a8a8a" /></button>
          </HistoryNav>
          <MessageInput aria-label="Message" placeholder="Type message, or press ‘up’ for prev one" />
          <HelperBadge type="button" aria-label="Writing helper"><HelperIcon /></HelperBadge>
          <button type="button" aria-label="Send"><SendIcon /></button>
        </Composer>
      </Column>

      <Column $w={74}>
        <ColumnHead>
          <HeadTitle>L.</HeadTitle>
          <ClearButton><Trash2 size={17} />Clear</ClearButton>
        </ColumnHead>
        <LogSummary>
          <SummaryCell $divided>S.</SummaryCell>
          <SummaryCell>~.</SummaryCell>
        </LogSummary>
        <LogRows>
          <LogList>
            <LogRow aria-label="When chat message received"><ChatsIcon size={20} /></LogRow>
            <LogRow aria-label="AI Agent"><Bot size={20} /></LogRow>
            <LogTree width={31} height={102} viewBox="0 0 31 102" fill="none" stroke="#555" strokeWidth="2">
              <path d="M21 0v90a10 10 0 0 0 10 10M21 10a10 10 0 0 0 10 10.500M21 50a10 10 0 0 0 10 10" />
            </LogTree>
            <LogRow $on aria-label="If"><SignIcon size={20} /></LogRow>
            <LogRow aria-label="Basic LLM Chain"><Link size={20} /></LogRow>
          </LogList>
          <Scrollbar thumb={130} />
        </LogRows>
      </Column>

      <Column $w={297}>
        <ColumnHead>
          <SignIcon size={20} />
          <RunStatus>Success</RunStatus>
          <ViewToggle>Input</ViewToggle>
          <ViewToggle $on>Output</ViewToggle>
          <HeadIcon $gap={16} aria-label="More"><Ellipsis size={16} /></HeadIcon>
          <HeadIcon $gap={18} aria-label="Collapse"><ChevronDown size={20} /></HeadIcon>
        </ColumnHead>
        <OutputTitle>
          <h3>OUTPUT</h3>
          <span>1 item</span>
        </OutputTitle>
        <Tabs>
          <Tab $on>True Branch (1 item)</Tab>
          <Tab>False&nbsp;Branch</Tab>
          <TabNext aria-label="More branches"><ChevronRight size={16} /></TabNext>
        </Tabs>
        <OutputBody>
          <TableClip>
            <DataTable>
              <thead>
                <tr><th>output</th></tr>
              </thead>
              <tbody>
                <tr>
                  <td>
                    Thank you, it is saved!, Would you like to add another person?<br />
                    <Nl /><Nl />Here are all saved entries:<Nl /><Nl />- Customer name: John brown (eategrant@gmail.com) &nbsp;<Nl /> &nbsp;- Person name: Jesse &nbsp;<Nl /> &nbsp;- Relationship to customer: friend
                  </td>
                </tr>
              </tbody>
            </DataTable>
          </TableClip>
          <Scrollbar thumb={64} />
        </OutputBody>
      </Column>
    </Panel>
  );
}

/* ---------- Taskbar icons ---------- */

const StartIcon = () => (
  <svg width={29} height={29} viewBox="0 0 29 29">
    <defs>
      <linearGradient id="start" x1="0" y1="0" x2="29" y2="29" gradientUnits="userSpaceOnUse">
        <stop offset="0" stopColor="#8be2ff" />
        <stop offset=".5" stopColor="#3fc4ff" />
        <stop offset="1" stopColor="#0a93fa" />
      </linearGradient>
    </defs>
    <path fill="url(#start)" d="M1 0h13v14H0V1a1 1 0 0 1 1-1ZM15 0h13a1 1 0 0 1 1 1v13H15ZM0 15h14v14H1a1 1 0 0 1-1-1ZM15 15h14v13a1 1 0 0 1-1 1H15Z" />
  </svg>
);

const Blossom = ({ x, y, r }: { x: number; y: number; r: number }) => (
  <g transform={`translate(${x} ${y})`}>
    {[0, 72, 144, 216, 288].map((a) => (
      <ellipse key={a} cx="0" cy={-r * 0.58} rx={r * 0.44} ry={r * 0.5} fill={a % 144 ? "#f59e86" : "#ffb9a3"} transform={`rotate(${a})`} />
    ))}
    <circle r={r * 0.24} fill="#c94f3d" />
  </g>
);

const SpringPicture = () => (
  <svg width={58} height={34} viewBox="0 0 58 34" aria-hidden="true">
    <defs>
      <linearGradient id="hill" x1="0" x2="1">
        <stop offset="0" stopColor="#6f9b3a" />
        <stop offset=".5" stopColor="#d3c27c" />
        <stop offset="1" stopColor="#a9b85a" />
      </linearGradient>
    </defs>
    <path d="M33 24 48 14q6 4 8 10Z" fill="#3f8a2f" />
    <path d="M1 29Q0 24 5 24q14 4 34-1 14-3 18 3 1 4-4 5-26 4-47 1-4-1-5-3Z" fill="url(#hill)" />
    <path d="M12 32 6 25M19 33l-6-8M27 33l-6-8M35 32l-6-7M43 32l-6-8M50 31l-6-8" stroke="#6f7f2c" strokeWidth="1" />
    <path d="M9 27Q18 22 21 14T31 3M13 24 11 15M20 17 40 12" fill="none" stroke="#7c4a35" strokeWidth="1.500" />
    <path d="M14 1q5 3 5 10-5-3-5-10ZM25 1q-6 3-6 10 6-3 6-10ZM42 4q5 2 5 9-6-2-5-9Z" fill="#5d9a3e" />
    <ellipse cx="13" cy="14" rx="2" ry="3" fill="#f28e7a" />
    <ellipse cx="31" cy="5" rx="2.500" ry="3.500" fill="#f28e7a" />
    <Blossom x={37} y={12} r={7} />
    <Blossom x={26} y={21} r={8} />
  </svg>
);

const Svg = ({ children }: { children: React.ReactNode }) => (
  <svg width={30} height={30} viewBox="0 0 30 30" fontFamily="Open Sans, sans-serif">{children}</svg>
);

const TaskViewIcon = () => (
  <Svg>
    <rect x="0" y="8.500" width="22.500" height="20" rx="1" fill="#696969" />
    <rect x="7" y="1" width="23" height="20" rx="1" fill="#f4f4f4" />
    <path d="M7 8.500h15.500V21H7Z" fill="#b4b4b4" />
  </Svg>
);

const CopilotIcon = () => (
  <Svg>
    <defs>
      <linearGradient id="cpA" x1="0" y1="0" x2="0" y2="1">
        <stop offset="0" stopColor="#1e6fe0" /><stop offset=".5" stopColor="#35b6c8" /><stop offset=".75" stopColor="#9ccb4a" /><stop offset="1" stopColor="#f4c32e" />
      </linearGradient>
      <linearGradient id="cpB" x1="0" y1="0" x2="0" y2="1">
        <stop offset="0" stopColor="#a05cf0" /><stop offset=".55" stopColor="#f0608a" /><stop offset="1" stopColor="#f9a05a" />
      </linearGradient>
    </defs>
    <path d="M9 2.500h10q2 0 2.700 2.500l.8 3h-4q-2 0-2.700 2.300L13 19q-.8 2.500-3 2.500H4Q0 21.500 1.200 17L5 6q1-3.500 4-3.500Z" fill="url(#cpA)" />
    <path d="M9 2.500h10q2 0 2.700 2.500l.8 3h-4q-2 0-2.500 2.300Q14 2.500 9 2.500Z" fill="#173fae" />
    <path d="M21 8h4.500q3.700 0 3.300 4L25 23.500Q23.500 27 21 27H11q-2 0-2.700-2.500l-.8-3H11q2 0 2.700-2.300l3.400-9Q18 8 21 8Z" fill="url(#cpB)" />
  </Svg>
);

const EdgeIcon = () => (
  <Svg>
    <defs>
      <linearGradient id="edA" x1="0" y1="0" x2="1" y2=".5">
        <stop offset="0" stopColor="#23a7e8" /><stop offset=".5" stopColor="#35c8d0" /><stop offset="1" stopColor="#63df55" />
      </linearGradient>
      <linearGradient id="edB" x1="0" y1="0" x2="0" y2="1">
        <stop offset="0" stopColor="#1f8fe0" /><stop offset="1" stopColor="#0f4fa8" />
      </linearGradient>
    </defs>
    <circle cx="15" cy="15" r="15" fill="url(#edB)" />
    <path d="M0 14C1 5 7 0 15 0c9 0 15 6 15 13 0 5-4 7.500-8 7.500-3 0-4.500-1.200-4.500-2.300 0-.8 1.300-1.500 1.300-3.700C18.800 10.500 15 8 10.500 8 5 8 1 11 0 14Z" fill="url(#edA)" />
    <path d="M18.800 14.500c0 2.200-1.300 2.900-1.300 3.700 0 1.100 1.500 2.300 4.500 2.300 2 0 4-.6 5.600-1.800C26 22 25 23 23 24.500c-6 1.500-11.500-2-11.500-7 0-3 1.600-5 3.500-6 2.300.2 3.800 1.600 3.800 3Z" fill="#123f86" />
    <path d="M17.500 18.200c0 1.100 1.500 2.300 4.500 2.300 3 0 5-1 7-3.500l1 3-3 4-8-1.500Z" fill="#1f1f1f" opacity=".85" />
  </Svg>
);

const FolderIcon = () => (
  <Svg>
    <path d="M0 4a2 2 0 0 1 2-2h8l3 3.500h15a2 2 0 0 1 2 2V12H0Z" fill="#dd9a12" />
    <path d="M0 9q6 0 9-.5L13 6h15a2 2 0 0 1 2 2v18a2 2 0 0 1-2 2H2a2 2 0 0 1-2-2Z" fill="#fccb43" />
    <path d="M5 28v-5a2 2 0 0 1 2-2h16a2 2 0 0 1 2 2v5Z" fill="#0d78c8" />
    <path d="M9 24.500h12" stroke="#0a4f8c" strokeWidth="1.500" />
  </Svg>
);

const DellIcon = () => (
  <Svg>
    <rect width="30" height="30" fill="#0877d4" />
    <circle cx="15" cy="15" r="11.500" fill="none" stroke="#fff" strokeWidth="1.200" />
    <text x="15" y="17.800" fontSize="8" fontWeight="700" fill="#fff" textAnchor="middle">DELL</text>
  </Svg>
);

const StoreIcon = () => (
  <Svg>
    <path d="M8.500 7V3.500a1.500 1.500 0 0 1 1.500-1.500h10a1.500 1.500 0 0 1 1.500 1.500V7" fill="none" stroke="#29a8ea" strokeWidth="2" />
    <path d="M.5 6h29v20a4 4 0 0 1-4 4h-21a4 4 0 0 1-4-4Z" fill="#f1f1f1" />
    <path d="M9.500 12h5v5h-5Z" fill="#f25022" /><path d="M15.500 12h5v5h-5Z" fill="#7fba00" />
    <path d="M9.500 18h5v5h-5Z" fill="#00a4ef" /><path d="M15.500 18h5v5h-5Z" fill="#ffb900" />
  </Svg>
);

const ShieldIcon = () => (
  <Svg>
    <path d="M1.500 0 15 6.500 28.500 0v23.500L15 30 1.500 23.500Z" fill="#c5282d" />
    <path d="M28.500 0v23.500L15 30V6.500Z" fill="#97201f" opacity=".4" />
    <path d="M7 9.500 15 13l8-3.500v11L15 24.500 7 20.500Z" fill="#1c1c1c" />
  </Svg>
);

const ChromeIcon = () => (
  <Svg>
    <circle cx="15" cy="15" r="15" fill="#fbc116" />
    <path d="M2 7.500A15 15 0 0 1 28 7.500H15L8.500 18.700Z" fill="#e33b2e" />
    <path d="M2 7.500 8.500 18.800A7.500 7.500 0 0 0 15 22.500h6.500L15 30A15 15 0 0 1 2 7.500Z" fill="#2a9c48" />
    <path d="M21.500 18.700 15 30l-1-.1 4.500-7.900Z" fill="#fbc116" />
    <circle cx="15" cy="15" r="7.200" fill="#fff" />
    <circle cx="15" cy="15" r="5.700" fill="#3d7ff0" />
  </Svg>
);

const Letter = ({ fill, x, children }: { fill: string; x: number; children: string }) => (
  <g>
    <rect x={x} y="14" width="12" height="12" rx="2" fill={fill} />
    <text x={x + 6} y="23.500" fontSize="9" fontWeight="700" fill="#fff" textAnchor="middle">{children}</text>
  </g>
);

const OutlookIcon = () => (
  <Svg>
    <path d="M2 10 15 1l14 9v16a3 3 0 0 1-3 3H5a3 3 0 0 1-3-3Z" fill="#2e9df0" />
    <path d="M2 10 15 1l5 3L4 15Z" fill="#6ab6f5" />
    <path d="M7 14 22 5l7 5-16 9Z" fill="#2b50cf" />
    <path d="M29 11v12L17 29H5q13-4 24-18Z" fill="#54d0fb" />
    <Letter fill="#1258c4" x={0}>O</Letter>
  </Svg>
);

const WordIcon = () => (
  <Svg>
    <rect x="5" y="1" width="22" height="28" rx="3" fill="#185fd6" />
    <path d="M8 1h16a3 3 0 0 1 3 3v6H5V4a3 3 0 0 1 3-3Z" fill="#4fcdf8" />
    <path d="M5 10h22v9H5Z" fill="#3c8ff0" />
    <Letter fill="#1044a8" x={1}>W</Letter>
  </Svg>
);

const GearIcon = () => (
  <Svg>
    <g fill="#8a949e">
      <circle cx="15" cy="15" r="11.500" />
      {[0, 60, 120].map((a) => <rect key={a} x="11" y="0.500" width="8" height="29" rx="2" transform={`rotate(${a + 30} 15 15)`} />)}
    </g>
    <circle cx="15" cy="15" r="7" fill="#f2f2f2" />
    <circle cx="15" cy="15" r="5.500" fill="#1172c9" />
  </Svg>
);

const ProjectIcon = () => (
  <svg width={30} height={30} viewBox="0 0 30 30" fontFamily="Liberation Serif, serif" fontWeight="700" fontSize="9">
    <text x="0" y="13" fill="#f30606">Project</text>
    <text x="1" y="21" fill="#000">Libre.</text>
  </svg>
);

const PromptIcon = () => (
  <Svg>
    <defs>
      <linearGradient id="prompt" x1="0" y1="0" x2="0" y2="1">
        <stop offset="0" stopColor="#c2b3fb" /><stop offset=".5" stopColor="#7f87f8" /><stop offset="1" stopColor="#3f3df5" />
      </linearGradient>
    </defs>
    <path d="M9 3q6-5 12 0 7 1 6.500 8 3 6-2 10-2 7-9.500 6-6 3-10-2-5-3-3.500-9-1-6 3-8 1-4 3.500-5Z" fill="url(#prompt)" />
    <path d="m8 11 3.500 4L8 19M15 18.500h7" stroke="#fff" strokeWidth="2" fill="none" />
  </Svg>
);

const SlidesIcon = () => (
  <Svg>
    <circle cx="16" cy="15" r="14" fill="#e2553c" />
    <path d="M16 1a14 14 0 0 1 14 14L21 14Q16 9 16 1Z" fill="#fdb05a" />
    <path d="M4 7q6-6 12-6 0 8 5 13L9 17Z" fill="#c93a2d" />
    <path d="M30 15a14 14 0 0 1-14 14l5-15Z" fill="#f4777c" />
    <Letter fill="#b4162c" x={1}>P</Letter>
  </Svg>
);

const ScriptIcon = () => (
  <svg width={30} height={30} viewBox="0 0 30 30" fontFamily="Open Sans, sans-serif" fontWeight="300" fontSize="18">
    <text x="15" y="22" fill="#c8c8c8" textAnchor="middle">Th</text>
  </svg>
);

const apps: { name: string; icon: React.ReactNode; running?: boolean; active?: boolean; badge?: string }[] = [
  { name: "Task view", icon: <TaskViewIcon /> },
  { name: "Copilot", icon: <CopilotIcon /> },
  { name: "Edge", icon: <EdgeIcon />, running: true, active: true },
  { name: "File Explorer", icon: <FolderIcon />, running: true },
  { name: "Dell", icon: <DellIcon /> },
  { name: "Store", icon: <StoreIcon /> },
  { name: "McAfee", icon: <ShieldIcon /> },
  { name: "Chrome", icon: <ChromeIcon /> },
  { name: "Outlook", icon: <OutlookIcon />, running: true },
  { name: "Thonny", icon: <ScriptIcon /> },
  { name: "Word", icon: <WordIcon />, running: true },
  { name: "WhatsApp", icon: <FaWhatsapp size={34} color="#25d366" />, running: true, badge: "57" },
  { name: "Settings", icon: <GearIcon />, running: true },
  { name: "ProjectLibre", icon: <ProjectIcon />, running: true },
  { name: "Terminal", icon: <PromptIcon />, running: true },
  { name: "PowerPoint", icon: <SlidesIcon />, running: true },
];

const WeatherIcon = () => (
  <svg width={26} height={26} viewBox="0 0 26 26">
    <defs>
      <linearGradient id="moon" x1="0" y1="0" x2=".6" y2="1">
        <stop offset="0" stopColor="#f5c944" /><stop offset="1" stopColor="#f4690f" />
      </linearGradient>
    </defs>
    <circle cx="13" cy="13" r="12" fill="url(#moon)" />
  </svg>
);

const CloudInfoIcon = () => (
  <svg width={22} height={20} viewBox="0 0 22 20">
    <path d="M6 15a5 5 0 0 1-1-9.500 6 6 0 0 1 10.500-1.500A6 6 0 0 1 17 15Z" fill="#c4c4c4" />
    <circle cx="15.500" cy="13" r="5.800" fill="#0f7ad8" />
    <path d="M15.500 12v4M15.500 9.600v1.300" stroke="#fff" strokeWidth="1.400" />
  </svg>
);

const SyncIcon = () => (
  <svg width={22} height={22} viewBox="0 0 22 22" fill="none" stroke="#e6e6e6" strokeWidth="1.300">
    <path d="M2 9a9 9 0 0 1 16-4M19 1v5h-5M9 20a8 8 0 0 1-6-5M2 20v-5h5" />
    <circle cx="16" cy="16" r="5" fill="#ff9a0a" stroke="none" />
  </svg>
);

const WifiIcon = () => (
  <svg width={22} height={18} viewBox="0 0 22 18" fill="none" stroke="#fff" strokeWidth="1.700">
    <path d="M1.500 7a13.500 13.500 0 0 1 19 0M4.500 10a9.300 9.300 0 0 1 13 0M7.500 13a5 5 0 0 1 7 0" />
    <circle cx="11" cy="15.300" r="1.800" fill="#fff" stroke="none" />
  </svg>
);

const SpeakerIcon = () => (
  <svg width={20} height={18} viewBox="0 0 20 18" fill="none" stroke="#fff" strokeWidth="1.400">
    <path d="M1 6.500h3.500L9 2.500v13L4.500 11.500H1Z" />
    <path d="M11.500 6a4.500 4.500 0 0 1 0 6M14 4a8 8 0 0 1 0 10" />
    <path d="M16.500 2a11 11 0 0 1 0 14" stroke="#5a5a5a" />
  </svg>
);

const BatteryIcon = () => (
  <svg width={26} height={18} viewBox="0 0 26 18">
    <rect x="1" y="4" width="21" height="12" rx="3.500" fill="none" stroke="#fff" strokeWidth="1.500" />
    <rect x="3" y="6" width="17" height="8" rx="1.500" fill="#8fd694" />
    <path d="M24.500 8v4" stroke="#fff" strokeWidth="2" />
    <path d="M13 0 8.500 8.500h3L10.500 13 16 6h-3.500Z" fill="#fff" stroke="#1c1c1c" strokeWidth=".6" />
  </svg>
);

function Taskbar() {
  return (
    <TaskbarRoot>
      <Weather aria-label="Weather">
        <WeatherIcon />
        <Temperature>27°</Temperature>
      </Weather>
      <TaskButton aria-label="Start"><StartIcon /></TaskButton>
      <SearchBox>
        <Search size={20} color="#e2e2e2" />
        <input type="text" aria-label="Search" placeholder="Search" />
        <SpringPicture />
      </SearchBox>
      {apps.map((a) => (
        <TaskButton key={a.name} aria-label={a.name} $active={a.active}>
          {a.icon}
          {a.badge && <Unread>{a.badge}</Unread>}
          {a.running && <RunMark $active={a.active} />}
        </TaskButton>
      ))}
      <Tray>
        <TrayCell $w={40} aria-label="Hidden icons"><ChevronUp size={22} /></TrayCell>
        <TrayCell $w={40} aria-label="Cloud storage"><CloudInfoIcon /></TrayCell>
        <TrayCell $w={40} aria-label="Updates"><SyncIcon /></TrayCell>
        <TrayCell $w={58}>ENG<br />US</TrayCell>
        <TrayCell $w={34} aria-label="Network"><WifiIcon /></TrayCell>
        <TrayCell $w={26} aria-label="Volume"><SpeakerIcon /></TrayCell>
        <TrayCell $w={40} aria-label="Battery"><BatteryIcon /></TrayCell>
        <TrayCell $w={82} $right>2:55 pm<br />11/3/2026</TrayCell>
      </Tray>
    </TaskbarRoot>
  );
}

export default function App() {
  return (
    <Desktop>
      <GlobalStyle />
      <AppWindow>
        <Sidebar aria-label="Main">
          <SideTop>
            <SideButton $h={22} aria-label="Chat"><MessageCircle size={20} strokeWidth={1.75} /></SideButton>
          </SideTop>
          <SideBottom>
            <SideButton aria-label="Admin panel"><Cloud size={20} /></SideButton>
            <SideButton aria-label="Templates"><OpenBoxIcon /></SideButton>
            <SideButton aria-label="Insights"><BarsIcon /></SideButton>
            <SideButton aria-label="Help"><CircleQuestionMark size={20} /><Alert /></SideButton>
            <SideButton aria-label="Settings"><Settings size={20} /></SideButton>
          </SideBottom>
        </Sidebar>
        <Main>
          <FlowCanvas />
          <BottomPanel />
        </Main>
      </AppWindow>
      <Taskbar />
    </Desktop>
  );
}
